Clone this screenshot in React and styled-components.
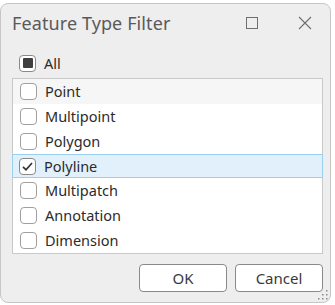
import React from "react";
import styled, { createGlobalStyle } from "styled-components";

const Global = createGlobalStyle`
  html, body { margin: 0; padding: 0; background: #ffffff; }
  body { font-family: "Noto Sans", "Open Sans", sans-serif; }
`;

const Window = styled.div`
  position: relative;
  box-sizing: border-box;
  margin-top: 3px;
  width: 331px;
  height: 300px;
  border: 1px solid #c6c6c6;
  border-radius: 8px;
  background: #eeeeee;
  display: flex;
  flex-direction: column;
`;

const TitleBar = styled.div`
  height: 37px;
  display: flex;
  align-items: center;
  padding-left: 11px;
  padding-right: 2px;
`;

const Title = styled.div`
  flex: 1;
  font-size: 18px;
  color: #5a5a5a;
  letter-spacing: 0.1px;
`;

const TitleButton = styled.div`
  width: ${(p) => p.$w}px;
  height: 30px;
  display: flex;
  align-items: center;
  justify-content: center;
`;

const AllRow = styled.div`
  display: flex;
  align-items: center;
  height: 24px;
  margin-top: 10px;
  padding-left: 18px;
  gap: 8px;
  font-size: 14.5px;
  color: #2b2b2b;
`;

const Box = styled.div`
  box-sizing: border-box;
  width: 17px;
  height: 17px;
  border: 1px solid ${(p) => (p.$dark ? "#8a8a8a" : "#a0a0a0")};
  border-radius: 4px;
  background: #ffffff;
  display: flex;
  align-items: center;
  justify-content: center;
  flex-shrink: 0;
`;

const Indeterminate = styled.div`
  width: 10px;
  height: 10px;
  border-radius: 1px;
  background: #3f3f3f;
`;

const List = styled.div`
  box-sizing: border-box;
  margin: 3px 7px 0 11px;
  height: 176px;
  border: 1px solid #c9c9c9;
  background: #ffffff;
  display: flex;
  flex-direction: column;
`;

const Row = styled.div`
  box-sizing: border-box;
  height: 25px;
  display: flex;
  align-items: center;
  gap: 8px;
  padding-left: ${(p) => (p.$selected ? 6 : 7)}px;
  font-size: 14.5px;
  color: #2b2b2b;
  background: ${(p) => (p.$selected ? "#e2f0fb" : p.$hover ? "#f6f6f6" : "transparent")};
  border: ${(p) => (p.$selected ? "1px solid #9bcfee" : "none")};
  margin: ${(p) => (p.$selected ? "0 -1px" : "0")};
`;

const Label = styled.span`
  line-height: 20px;
  margin-top: -1px;
`;

const Footer = styled.div`
  display: flex;
  justify-content: flex-end;
  gap: 8px;
  padding-right: 7px;
  margin-top: 10px;
`;

const Button = styled.button`
  box-sizing: border-box;
  width: 88px;
  height: 28px;
  border: 1px solid #8a8a8a;
  border-radius: 4px;
  background: #ffffff;
  font-family: "Noto Sans", "Open Sans", sans-serif;
  font-size: 15px;
  color: #3a3a3a;
  padding: 0 0 1px 0;
`;

const Grip = styled.svg`
  position: absolute;
  right: 2px;
  bottom: 2px;
`;

const items = ["Point", "Multipoint", "Polygon", "Polyline", "Multipatch", "Annotation", "Dimension"];

export default function App() {
  return (
    <>
      <Global />
      <Window>
        <TitleBar>
          <Title>Feature Type Filter</Title>
          <TitleButton $w={60}>
            <svg width="12" height="12" viewBox="0 0 12 12">
              <rect x="0.5" y="0.5" width="11" height="11" fill="none" stroke="#6f6f6f" strokeWidth="1" />
            </svg>
          </TitleButton>
          <TitleButton $w={46}>
            <svg width="14" height="14" viewBox="0 0 14 14">
              <path d="M1 1 L13 13 M13 1 L1 13" stroke="#6f6f6f" strokeWidth="1.1" />
            </svg>
          </TitleButton>
        </TitleBar>
        <AllRow>
          <Box $dark>
            <Indeterminate />
          </Box>
          <Label>All</Label>
        </AllRow>
        <List>
          {items.map((name, i) => (
            <Row key={name} $selected={name === "Polyline"} $hover={i === 0}>
              <Box $dark={name === "Polyline"}>
                {name === "Polyline" && (
                  <svg width="13" height="13" viewBox="0 0 13 13">
                    <path d="M2 6.8 L5 9.8 L11 3" fill="none" stroke="#333" strokeWidth="1.7" />
                  </svg>
                )}
              </Box>
              <Label>{name}</Label>
            </Row>
          ))}
        </List>
        <Footer>
          <Button>OK</Button>
          <Button>Cancel</Button>
        </Footer>
        <Grip width="10" height="12" viewBox="0 0 10 12">
          <g fill="#8a8a8a">
            <rect x="8" y="2" width="1.5" height="1.5" />
            <rect x="8" y="6" width="1.5" height="1.5" />
            <rect x="4" y="6" width="1.5" height="1.5" />
            <rect x="8" y="10" width="1.5" height="1.5" />
            <rect x="4" y="10" width="1.5" height="1.5" />
            <rect x="0" y="10" width="1.5" height="1.5" />
          </g>
        </Grip>
      </Window>
    </>
  );
}
